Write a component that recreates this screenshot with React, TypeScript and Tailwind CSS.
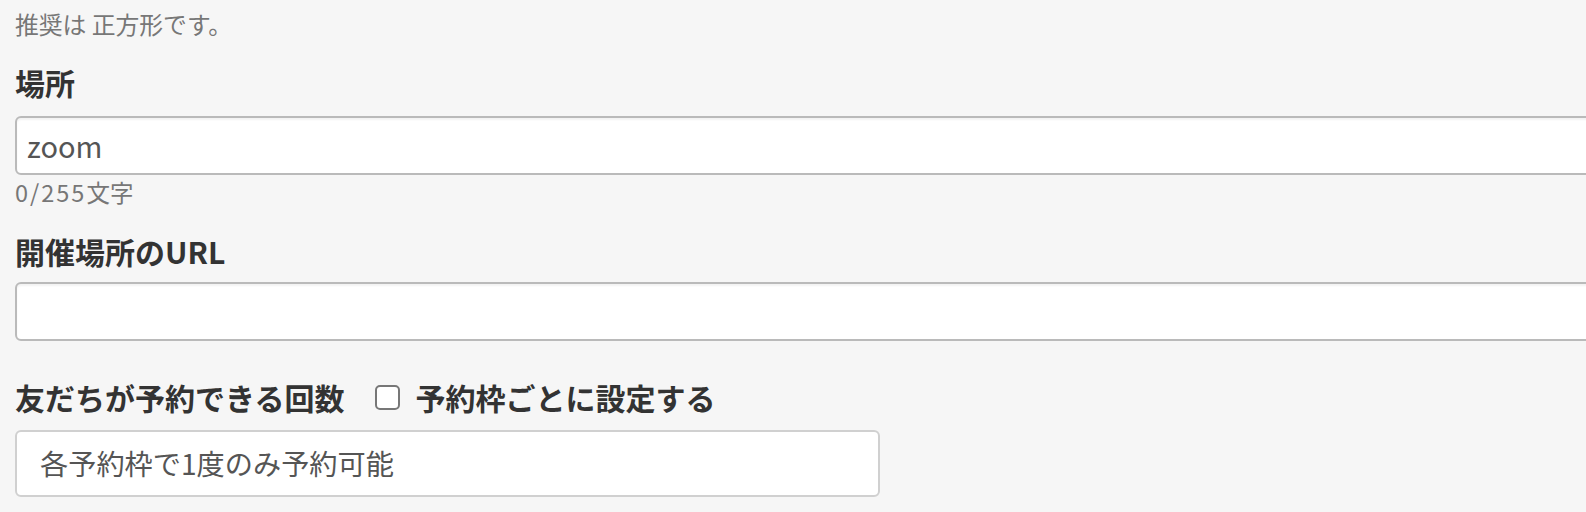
import React from "react";

const font = { fontFamily: '"Noto Sans CJK JP", "Noto Sans", sans-serif' };

export default function App() {
  return (
    <div className="w-full min-h-[512px] overflow-hidden bg-[#f6f6f6]" style={font}>
      <div className="pl-[15px] pt-[8px]">
        <p className="text-[23.8px] leading-[32px] text-[#777777]">推奨は 正方形です。</p>

        <h2 className="mt-[22px] text-[30px] leading-[40px] font-bold text-[#333333]">場所</h2>
        <div className="mt-[14px] w-[calc(100%+20px)] h-[59px] rounded-[6px] border-2 border-[#bababa] bg-white shadow-[inset_0_2px_2px_rgba(0,0,0,0.05)] flex items-center pl-[10px] text-[29px] text-[#555555]">
          zoom
        </div>
        <p className="mt-[3px] text-[23.5px] leading-[28px] text-[#777777]">
          <span className="tracking-[2px]">0/255</span>文字
        </p>

        <h2 className="mt-[25px] text-[30px] leading-[40px] font-bold text-[#333333]">開催場所のURL</h2>
        <div className="mt-[11px] w-[calc(100%+20px)] h-[59px] rounded-[6px] border-2 border-[#bababa] bg-white shadow-[inset_0_2px_2px_rgba(0,0,0,0.05)]"></div>

        <div className="mt-[36px] flex items-center h-[40px]">
          <h2 className="text-[30px] leading-[40px] font-bold text-[#333333]">友だちが予約できる回数</h2>
          <span className="ml-[31px] w-[25px] h-[25px] rounded-[5px] border-2 border-[#777777] bg-white"></span>
          <span className="ml-[15px] text-[30px] leading-[40px] font-bold text-[#333333]">予約枠ごとに設定する</span>
        </div>
        <div className="mt-[13px] w-[865px] h-[67px] rounded-[6px] border-2 border-[#d0d0d0] bg-white flex items-center pl-[23px] text-[28.2px] text-[#555555]">
          各予約枠で1度のみ予約可能
        </div>
      </div>
    </div>
  );
}
